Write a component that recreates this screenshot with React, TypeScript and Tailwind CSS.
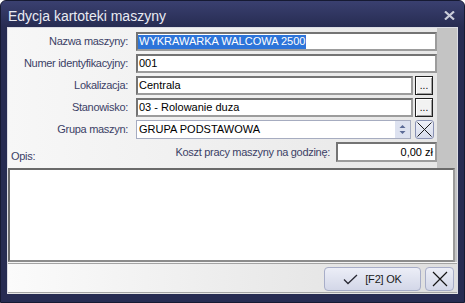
import React from "react";

const F = { fontFamily: '"Liberation Sans", Arial, sans-serif' };

function Label({ children }: { children: React.ReactNode }) {
  return (
    <div className="w-[120px] shrink-0 text-right text-[11px] tracking-[-0.3px] text-[#3b3f66] leading-none pr-0">
      {children}
    </div>
  );
}

function Field({ children, className = "" }: { children?: React.ReactNode; className?: string }) {
  return (
    <div
      className={
        "h-full bg-white border-2 border-t-[#747474] border-l-[#747474] border-b-[#9c9c9c] border-r-[#9c9c9c] flex items-center text-[11px] text-black leading-none " +
        className
      }
    >
      {children}
    </div>
  );
}

function DotsBtn() {
  return (
    <div className="w-[18px] h-[19px] shrink-0 ml-[2px] bg-[#f2f2f2] border border-[#202020] shadow-[inset_1px_1px_0_#ffffff,inset_-1px_-1px_0_#a0a0a0] flex items-end justify-center text-[10px] leading-none pb-[3px] text-black">
      ...
    </div>
  );
}

export default function App() {
  return (
    <div style={F} className="w-[465px] h-[303px] bg-[#272c52] rounded-t-[6px] border border-[#161a33] flex flex-col overflow-hidden">
      {/* title bar */}
      <div className="h-[26px] shrink-0 flex items-center pl-[7px] pr-[9px] bg-gradient-to-b from-[#3a4070] to-[#272c52]">
        <span className="text-[14px] text-[#e9ebf3] leading-none mt-[3px]">Edycja kartoteki maszyny</span>
        <div className="flex-1" />
        <svg width="11" height="9" viewBox="0 0 11 9" className="mt-[2px]">
          <path d="M1 0.5 L10 8.5 M10 0.5 L1 8.5" stroke="#c9ccd9" strokeWidth="2.2" />
        </svg>
      </div>
      {/* client */}
      <div className="flex-1 mx-[6px] flex flex-col border border-b-0 border-[#dcdde4] bg-[#c4c4c4]">
        {/* form section */}
        <div className="h-[140px] w-[429px] bg-gradient-to-r from-[#f7f7f7] to-[#e7e7e7] flex flex-col pt-[4px] gap-[3px]">
          <div className="h-[19px] flex items-center">
            <Label>Nazwa maszyny:</Label>
            <div className="flex-1 h-full ml-[8px]">
              <Field>
                <span className="bg-[#2d74d9] text-white h-[14px] flex items-center pl-[1px] pr-[1px]">WYKRAWARKA WALCOWA 2500</span>
              </Field>
            </div>
          </div>
          <div className="h-[19px] flex items-center">
            <Label>Numer identyfikacyjny:</Label>
            <div className="flex-1 h-full ml-[8px]">
              <Field className="pl-[1px]">001</Field>
            </div>
          </div>
          <div className="h-[19px] flex items-center pr-[4px]">
            <Label>Lokalizacja:</Label>
            <div className="flex-1 h-full ml-[8px]">
              <Field className="pl-[1px]">Centrala</Field>
            </div>
            <DotsBtn />
          </div>
          <div className="h-[19px] flex items-center pr-[4px]">
            <Label>Stanowisko:</Label>
            <div className="flex-1 h-full ml-[8px]">
              <Field className="pl-[1px]">03 - Rolowanie duza</Field>
            </div>
            <DotsBtn />
          </div>
          <div className="h-[19px] flex items-center pr-[3px]">
            <Label>Grupa maszyn:</Label>
            <div className="flex-1 h-full ml-[8px] bg-white border border-[#a6acc0] flex items-center text-[11px] text-black leading-none">
              <span className="pl-[2px] flex-1">GRUPA PODSTAWOWA</span>
              <div className="w-[15px] h-full bg-[#dde2f0] flex items-center justify-center">
                <svg width="7" height="11" viewBox="0 0 7 11">
                  <path d="M0.5 4 L3.5 1 L6.5 4 Z" fill="#5b6a96" />
                  <path d="M0.5 7 L3.5 10 L6.5 7 Z" fill="#5b6a96" />
                </svg>
              </div>
            </div>
            <div className="w-[19px] h-[19px] ml-[4px] rounded-[3px] border border-[#8a92b4] bg-gradient-to-b from-[#eef0f8] to-[#d6dbeb] flex items-center justify-center">
              <svg width="17" height="17" viewBox="0 0 17 17">
                <path d="M1.5 1.5 L15.5 15.5 M15.5 1.5 L1.5 15.5" stroke="#1a1a1a" strokeWidth="1" />
              </svg>
            </div>
          </div>
          <div className="h-[20px] flex items-center">
            <span className="ml-[3px] text-[11px] tracking-[-0.3px] text-[#3b3f66] leading-none mt-[8px]">Opis:</span>
            <div className="flex-1" />
            <span className="text-[11px] tracking-[-0.3px] text-[#3b3f66] leading-none">Koszt pracy maszyny na godzinę:</span>
            <div className="w-[101px] h-full ml-[6px]">
              <Field className="justify-end pr-[2px]">0,00 zł</Field>
            </div>
          </div>
        </div>
        {/* memo */}
        <div className="h-[94px] mr-[2px] bg-white border-2 border-t-[#6a6a6a] border-l-[#6a6a6a] border-b-[#8c8c8c] border-r-[#9a9a9a]" />
        {/* footer */}
        <div className="flex-1 flex flex-col border-t border-[#f4f4f4]">
          <div className="flex-1 border-t border-b border-[#a4a4a4] bg-gradient-to-r from-[#fbfbfb] to-[#dedede] flex items-start justify-end pt-[3px] pr-[3px] gap-[4px]">
            <div className="w-[97px] h-[24px] rounded-[4px] border border-[#a7adc8] bg-gradient-to-b from-[#eceef7] to-[#d3d7e8] flex items-center justify-center gap-[7px] text-[11px] text-[#1a1a1a] leading-none">
              <svg width="15" height="11" viewBox="0 0 15 11">
                <path d="M1 5.5 L5 9.5 L14 1" stroke="#2a2a35" strokeWidth="1.3" fill="none" />
              </svg>
              <span className="tracking-[-0.2px]">[F2] OK</span>
            </div>
            <div className="w-[29px] h-[24px] rounded-[4px] border border-[#a7adc8] bg-gradient-to-b from-[#eceef7] to-[#d3d7e8] flex items-center justify-center">
              <svg width="16" height="16" viewBox="0 0 16 16">
                <path d="M1 1 L15 15 M15 1 L1 15" stroke="#151515" strokeWidth="1.2" />
              </svg>
            </div>
          </div>
          <div className="h-[1px] bg-[#e6e6e6]" />
        </div>
      </div>
      <div className="h-[8px] shrink-0" />
    </div>
  );
}
